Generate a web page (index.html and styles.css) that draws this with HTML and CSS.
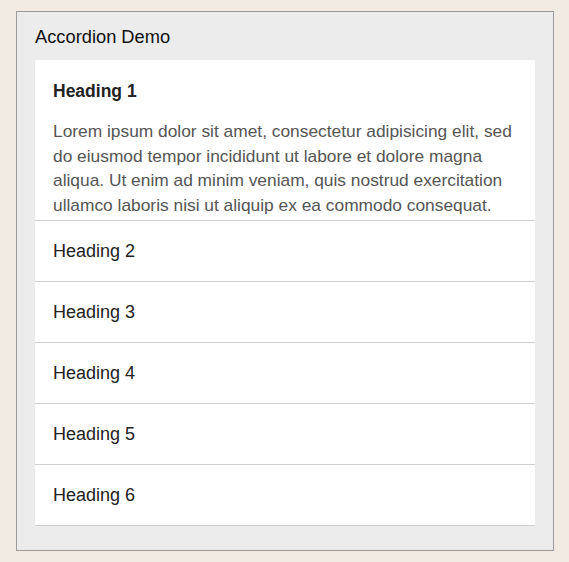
FILE: index.html
```html
<!DOCTYPE html>
<html lang="en">
<head>
    <meta charset="UTF-8">
    <meta name="viewport" content="width=device-width, initial-scale=1.0">
    <title>Accordion Demo</title>
    <link rel="stylesheet" href="styles.css">
</head>
<body>
    <div class="panel">
        <h1 class="panel-title">Accordion Demo</h1>

        <div class="accordion">
            <!-- open section -->
            <div class="section open">
                <h2 class="section-heading">Heading 1</h2>
                <p class="section-body">Lorem ipsum dolor sit amet, consectetur adipisicing elit, sed do eiusmod tempor incididunt ut labore et dolore magna aliqua. Ut enim ad minim veniam, quis nostrud exercitation ullamco laboris nisi ut aliquip ex ea commodo consequat.</p>
            </div>
            <div class="section"><h2 class="section-heading">Heading 2</h2></div>
            <div class="section"><h2 class="section-heading">Heading 3</h2></div>
            <div class="section"><h2 class="section-heading">Heading 4</h2></div>
            <div class="section"><h2 class="section-heading">Heading 5</h2></div>
            <div class="section"><h2 class="section-heading">Heading 6</h2></div>
        </div>
    </div>
</body>
</html>
```

FILE: styles.css
```css
body {
    background-color: #f2ebe3;
    font-family: "Liberation Sans", Arial, sans-serif;
    margin: 0;
    padding: 11px 16px;
}
.panel {
    width: 538px;
    box-sizing: border-box;
    background-color: #ececec;
    border: 1px solid #9a9a9a;
    padding: 0 18px 24px;
}
.panel-title {
    margin: 0;
    height: 48px;
    line-height: 49px;
    font-size: 18.3px;
    font-weight: normal;
    color: #111;
}
.accordion {
    background-color: white;
}
.section {
    border-bottom: 1px solid #cfcfcf;
    padding: 18px 18px;
}
.section-heading {
    margin: 0;
    font-size: 18px;
    line-height: 24px;
    font-weight: normal;
    color: #222;
}
.open .section-heading {
    font-weight: bold;
    font-size: 17.5px;
    line-height: 26px;
}
.open {
    padding-bottom: 3px;
}
.section-body {
    margin: 15px 0 0;
    font-size: 17.35px;
    line-height: 24.5px;
    color: #555;
}
```
